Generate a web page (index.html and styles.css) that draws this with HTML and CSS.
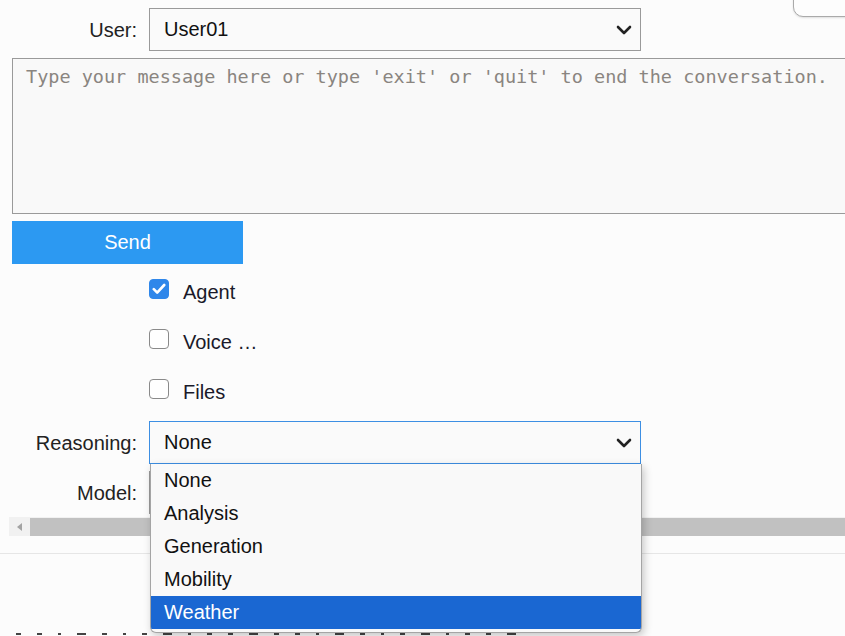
FILE: index.html
```html
<!DOCTYPE html>
<html>
<head>
<meta charset="utf-8">
<link rel="stylesheet" href="styles.css">
</head>
<body>
<div class="page">
  <div class="corner-box"></div>
  <div class="scroller">
    <div class="content">
      <div class="row">
        <label class="lbl">User:</label>
        <div class="select">
          <span>User01</span>
          <svg class="chev" width="16" height="10" viewBox="0 0 16 10"><path d="M2 2 L8 8 L14 2" fill="none" stroke="#222" stroke-width="2.6" stroke-linecap="round" stroke-linejoin="round"/></svg>
        </div>
      </div>
      <textarea class="msg" placeholder="Type your message here or type 'exit' or 'quit' to end the conversation."></textarea>
      <button class="send">Send</button>
      <div class="checks">
        <div class="check-row"><span class="box checked"><svg width="14" height="12" viewBox="0 0 14 12"><path d="M1.8 6.2 L5.2 9.6 L12.2 2" fill="none" stroke="#fff" stroke-width="2.6" stroke-linecap="round" stroke-linejoin="round"/></svg></span><span class="ctext">Agent</span></div>
        <div class="check-row"><span class="box"></span><span class="ctext">Voice …</span></div>
        <div class="check-row"><span class="box"></span><span class="ctext">Files</span></div>
      </div>
      <div class="row">
        <label class="lbl">Reasoning:</label>
        <div class="select focused">
          <span>None</span>
          <svg class="chev" width="16" height="10" viewBox="0 0 16 10"><path d="M2 2 L8 8 L14 2" fill="none" stroke="#222" stroke-width="2.6" stroke-linecap="round" stroke-linejoin="round"/></svg>
        </div>
      </div>
      <div class="row row-model">
        <label class="lbl">Model:</label>
        <div class="select"></div>
      </div>
    </div>
    <div class="hscroll">
      <span class="arrow"></span>
      <span class="thumb"></span>
    </div>
  </div>
  <div class="below">
    <div class="marks"><i></i><i></i><i></i><i></i><i></i><i></i><i></i><i></i><i></i><i></i><i></i><i></i><i></i><i></i><i></i><i></i><i></i><i></i><i></i><i></i><i></i><i></i><i></i><i></i></div>
  </div>
  <ul class="dropdown">
    <li>None</li>
    <li>Analysis</li>
    <li>Generation</li>
    <li>Mobility</li>
    <li class="active">Weather</li>
  </ul>
</div>
</body>
</html>
```
FILE: styles.css
```css
html, body {
  margin: 0;
  padding: 0;
  background: #fcfcfc;
}
body {
  font-family: "Liberation Sans", Arial, sans-serif;
  color: #222;
}
.page {
  position: relative;
  width: 845px;
  height: 636px;
  overflow: hidden;
}
.corner-box {
  position: absolute;
  left: 793px;
  top: -20px;
  width: 80px;
  height: 35px;
  border: 1px solid #aaa;
  border-radius: 10px;
  background: #fdfdfd;
  box-shadow: 0 1px 2px rgba(0,0,0,0.12);
}
.scroller {
  padding-left: 9px;
  padding-top: 8px;
  padding-bottom: 17px;
  border-bottom: 1px solid #e6e6e6;
}
.content {
  padding-left: 3px;
  display: flex;
  flex-direction: column;
}
.row {
  display: flex;
  align-items: center;
  gap: 12px;
  height: 43px;
}
.row + .row {
  margin-top: 7px;
}
.lbl {
  width: 125px;
  text-align: right;
  font-size: 20px;
  color: #222;
  padding-top: 1px;
}
.select {
  box-sizing: border-box;
  width: 492px;
  height: 43px;
  border: 1px solid #9a9a9a;
  background: #fafafa;
  display: flex;
  align-items: center;
  justify-content: space-between;
  padding: 0 8px 0 14px;
  font-size: 20px;
  color: #111;
}
.select.focused {
  border-color: #3d8fe3;
}
.chev {
  display: block;
}
.msg {
  box-sizing: border-box;
  margin: 7px 0 0 0;
  width: 860px;
  height: 156px;
  border: 1px solid #9a9a9a;
  background: #f9f9f9;
  padding: 7px 13px;
  font-family: "DejaVu Sans Mono", monospace;
  font-size: 18.5px;
  line-height: 22px;
  resize: none;
  outline: none;
}
.msg::placeholder {
  color: #8a8580;
}
.send {
  margin-top: 7px;
  width: 231px;
  height: 43px;
  border: none;
  background: #2c99f2;
  color: #fff;
  font-family: "Liberation Sans", Arial, sans-serif;
  font-size: 20px;
  padding: 0 0 1px 0;
}
.checks {
  display: flex;
  flex-direction: column;
  padding-left: 137px;
}
.check-row {
  height: 50px;
  display: flex;
  align-items: center;
  gap: 14px;
}
.box {
  box-sizing: border-box;
  width: 20px;
  height: 20px;
  margin-top: -1px;
  border: 1.5px solid #8a8a8a;
  border-radius: 4px;
  background: #fff;
  display: flex;
  align-items: center;
  justify-content: center;
}
.box.checked {
  background: #2f87ea;
  border-color: #2f87ea;
}
.ctext {
  font-size: 20px;
  color: #1a1a2a;
  padding-top: 6px;
}
.checks + .row {
  margin-top: 7px;
}
.hscroll {
  margin-top: 3px;
  height: 19px;
  background: #f1f1f1;
  display: flex;
  align-items: center;
}
.arrow {
  width: 0;
  height: 0;
  margin-left: 8px;
  border-top: 4px solid transparent;
  border-bottom: 4px solid transparent;
  border-right: 5px solid #a3a3a3;
}
.thumb {
  margin-left: 8px;
  flex: 1;
  height: 18px;
  background: #c1c1c1;
}
.below {
  height: 82px;
  display: flex;
  flex-direction: column;
  justify-content: flex-end;
}
.marks {
  display: flex;
  gap: 16px;
  padding-left: 16px;
  height: 3px;
}
.marks i {
  display: block;
  width: 5px;
  height: 2px;
  background: #444;
}
.marks i:nth-child(3n) {
  width: 3px;
}
.marks i:nth-child(4n) {
  width: 9px;
}
.dropdown {
  position: absolute;
  left: 150px;
  top: 464px;
  width: 490px;
  margin: 0;
  padding: 0 0 3px 0;
  list-style: none;
  background: #f9f9f9;
  border: 1px solid #a5a5a5;
  border-top: none;
  border-radius: 0 0 6px 6px;
  box-shadow: 2px 3px 8px rgba(0,0,0,0.22);
  overflow: hidden;
}
.dropdown li {
  height: 33px;
  line-height: 33px;
  padding-left: 13px;
  font-size: 20px;
  color: #111;
}
.dropdown li.active {
  background: #1a67d2;
  color: #fff;
}
```
